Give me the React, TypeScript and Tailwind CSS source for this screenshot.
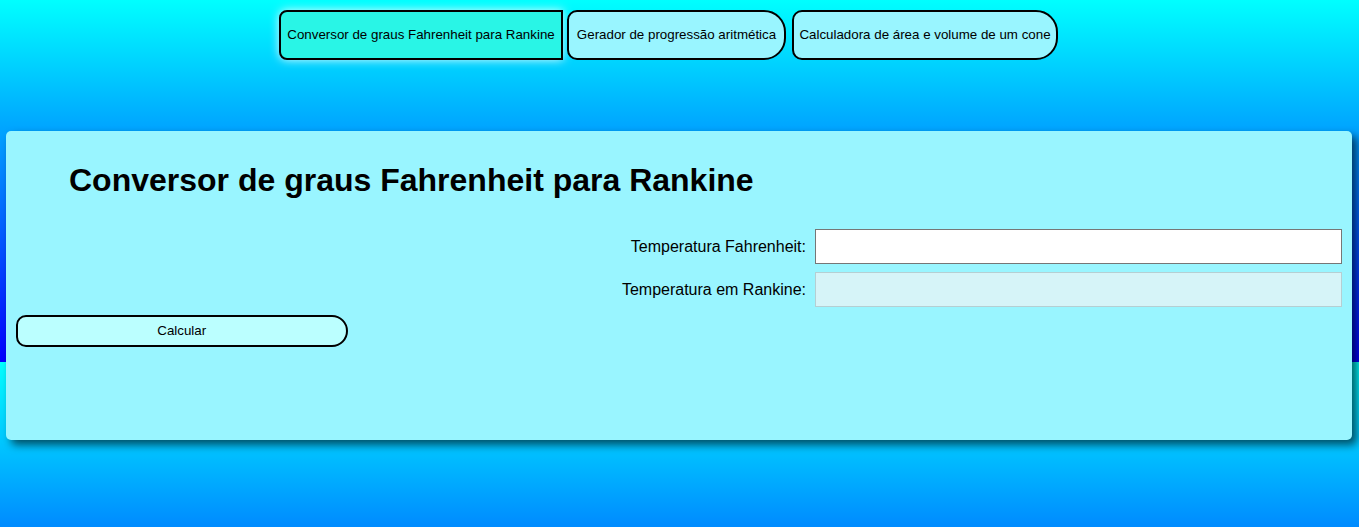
import React, { useState } from 'react';

const tabs = [
  { label: 'Conversor de graus Fahrenheit para Rankine', width: 'w-[284px]', gap: '' },
  { label: 'Gerador de progressão aritmética', width: 'w-[219px]', gap: 'ml-[4px]' },
  { label: 'Calculadora de área e volume de um cone', width: 'w-[266px]', gap: 'ml-[6px]' },
];

export default function App() {
  const [active, setActive] = useState(0);
  const [fahrenheit, setFahrenheit] = useState('');
  const [rankine, setRankine] = useState('');

  const calcular = () => {
    const f = parseFloat(fahrenheit.replace(',', '.'));
    if (isNaN(f)) {
      setRankine('');
      return;
    }
    setRankine((f + 459.67).toFixed(2));
  };

  return (
    <div className="min-h-[527px] bg-[linear-gradient(to_bottom,#00ffff,#0000ff)] bg-size-[100%_362px] bg-repeat-y font-['Liberation_Sans',Arial,sans-serif] text-black">
      <nav className="flex justify-center pr-[22px] pt-[10px]">
        {tabs.map((tab, i) => (
          <button
            key={tab.label}
            onClick={() => setActive(i)}
            className={
              i === active
                ? `${tab.width} ${tab.gap} h-[50px] border-2 border-black bg-[#29f5e6] rounded-l-[8px] rounded-r-none text-[13.33px] text-center shadow-[0_0_10px_rgba(255,255,255,0.85)]`
                : `${tab.width} ${tab.gap} h-[50px] border-2 border-black bg-[#99f5ff] rounded-l-[10px] rounded-r-[22px] text-[13.33px] text-center`
            }
          >
            {tab.label}
          </button>
        ))}
      </nav>

      <main className="mt-[71px] ml-[6px] mr-[7px] h-[309px] rounded-[5px] bg-[#99f5ff] p-[10px] shadow-[5px_5px_8px_rgba(0,0,0,0.6)]">
        <h1 className="mt-[21px] mb-[30px] pl-[53px] text-[32px] leading-[37px] font-bold">
          Conversor de graus Fahrenheit para Rankine
        </h1>

        <div className="flex flex-col gap-2">
          <div className="flex items-center justify-end gap-[9px]">
            <label htmlFor="fahrenheit" className="text-[16px]">Temperatura Fahrenheit:</label>
            <input
              id="fahrenheit"
              value={fahrenheit}
              onChange={e => setFahrenheit(e.target.value)}
              className="w-[527px] h-[35px] border border-[#767676] bg-white px-2 text-[16px] outline-none"
            />
          </div>
          <div className="flex items-center justify-end gap-[9px]">
            <label htmlFor="rankine" className="text-[16px]">Temperatura em Rankine:</label>
            <input
              id="rankine"
              value={rankine}
              readOnly
              className="w-[527px] h-[35px] border border-[#b5cfd3] bg-[#d6f4f8] px-2 text-[16px] outline-none"
            />
          </div>
          <div>
            <button
              onClick={calcular}
              className="w-1/4 h-[32px] border-2 border-black bg-[#bbffff] rounded-l-[10px] rounded-r-[16px] text-[13.33px]"
            >
              Calcular
            </button>
          </div>
        </div>
      </main>
    </div>
  );
}
